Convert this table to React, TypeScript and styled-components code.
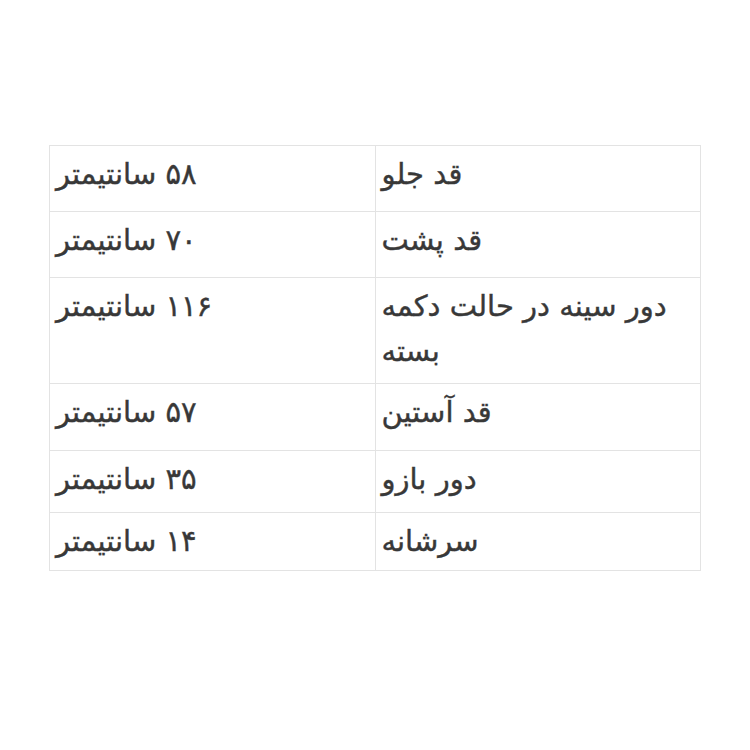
import React from "react";
import styled, { createGlobalStyle } from "styled-components";

const Global = createGlobalStyle`
  html, body { margin: 0; padding: 0; background: #fff; }
  body { font-family: "DejaVu Sans", "Noto Sans", sans-serif; }
`;

const Page = styled.div`
  width: 750px;
  height: 750px;
  box-sizing: border-box;
  padding: 145px 49px 0 49px;
  background: #fff;
`;

const Table = styled.table`
  width: 652px;
  direction: rtl;
  border-collapse: collapse;
  table-layout: fixed;
  border: 1px solid #e3e3e3;
`;

const Row = styled.tr<{ $h: number }>`
  height: ${(p) => p.$h}px;
`;

const Cell = styled.td`
  width: 50%;
  border: 1px solid #e3e3e3;
  padding: 6px 8px 3px 6px;
  vertical-align: top;
  text-align: left;
  font-size: 29px;
  line-height: 45px;
  color: #383838;
  -webkit-text-stroke: 0.4px #383838;
  box-sizing: border-box;
`;

const rows: { label: string; value: string; h: number }[] = [
  { label: "قد جلو", value: "۵۸ سانتیمتر", h: 66 },
  { label: "قد پشت", value: "۷۰ سانتیمتر", h: 66 },
  { label: "دور سینه در حالت دکمه بسته", value: "۱۱۶ سانتیمتر", h: 106 },
  { label: "قد آستین", value: "۵۷ سانتیمتر", h: 67 },
  { label: "دور بازو", value: "۳۵ سانتیمتر", h: 62 },
  { label: "سرشانه", value: "۱۴ سانتیمتر", h: 58 },
];

export default function App() {
  return (
    <>
      <Global />
      <Page>
        <Table>
          <tbody>
            {rows.map((r) => (
              <Row key={r.label} $h={r.h}>
                <Cell>{r.label}</Cell>
                <Cell>{r.value}</Cell>
              </Row>
            ))}
          </tbody>
        </Table>
      </Page>
    </>
  );
}
